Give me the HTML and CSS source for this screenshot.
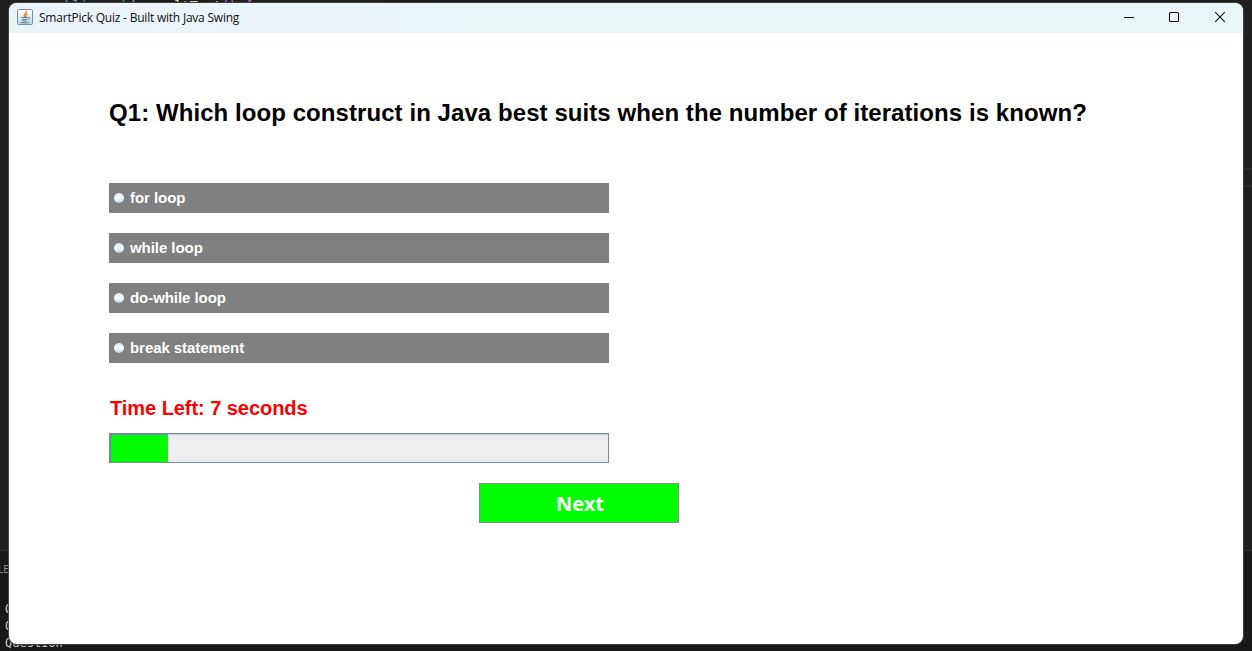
FILE: index.html
```html
<!DOCTYPE html>
<html lang="en">
<head>
<meta charset="utf-8">
<title>SmartPick Quiz</title>
<link rel="stylesheet" href="styles.css">
</head>
<body>
<div class="editor">
  <div class="code"><span class="kw">public</span> <span class="type">void</span> <span class="fn">resultText</span><span class="paren">()</span> <span class="brace">{</span></div>
  <div class="current-line"></div>
  <div class="terminal"></div>
  <div class="tab">LE</div>
  <pre class="output">Q
Q
Question</pre>
</div>
<main class="window">
  <header class="titlebar">
    <svg class="java" viewBox="0 0 16 16">
      <defs><linearGradient id="tile" x2="0" y2="1"><stop stop-color="#fff"/><stop offset="1" stop-color="#c3d3e2"/></linearGradient></defs>
      <rect x=".5" y=".5" width="15" height="15" rx="1" fill="url(#tile)" stroke="#7590a9"/>
      <path d="M9.2 1.8C10 4 5.8 4.7 7.6 8M10.6 4.3C7.9 5.6 9.7 6.3 8.7 8" fill="none" stroke="#ee8127" stroke-width="1.3"/>
      <path d="M4.5 8.5h6M5 10.3q2.5 1 5 0M5.6 11.8q2 .8 4 0M10.7 8.4c3-.5 1.8 2 .2 2.2M3.5 12.8c-2 1 7 1.8 9 .2" fill="none" stroke="#4f7da1"/>
    </svg>
    <span class="title">SmartPick Quiz - Built with Java Swing</span>
    <svg class="controls" viewBox="0 0 138 30" fill="none" stroke="#111" stroke-width="1.1">
      <path d="M19 14.5h10"/><rect x="64.5" y="9.5" width="9" height="9" rx="1"/><path d="M110.2 9.2l9.6 9.6m0-9.6l-9.6 9.6"/>
    </svg>
  </header>
  <section class="quiz">
    <h1 class="question">Q1: Which loop construct in Java best suits when the number of iterations is known?</h1>
    <div class="options">
      <label class="option"><i class="radio"></i><span class="answer">for loop</span></label>
      <label class="option"><i class="radio"></i><span class="answer">while loop</span></label>
      <label class="option"><i class="radio"></i><span class="answer">do-while loop</span></label>
      <label class="option"><i class="radio"></i><span class="answer">break statement</span></label>
    </div>
    <div class="timer">Time Left: 7 seconds</div>
    <div class="progress"><div class="fill"></div></div>
    <button class="next">Next</button>
  </section>
</main>
</body>
</html>
```
FILE: styles.css
```css
* { box-sizing: border-box; }
body { margin: 0; width: 1252px; height: 651px; overflow: hidden; background: #1f1f1f; font-family: "Liberation Sans", Arial, sans-serif; }
.editor { position: absolute; inset: 0; overflow: hidden; }
.code { position: absolute; left: 49px; top: -2px; font: 13px/16px "DejaVu Sans Mono", monospace; white-space: pre; color: #ccc; }
.kw { color: #569cd6; }
.type { color: #4ec9b0; }
.fn { color: #dcdcaa; }
.paren { color: #da70d6; }
.brace { color: #da70d6; }
.current-line { position: absolute; left: 1200px; right: 0; top: 168px; height: 19px; border: solid #2a2a2a; border-width: 2px 0; }
.terminal { position: absolute; left: 0; right: 0; top: 550px; bottom: 0; background: #181818; border-top: 1px solid #303030; }
.tab { position: absolute; left: -2px; top: 563px; font: 10px/13px "Open Sans", sans-serif; color: #999; }
.output { position: absolute; left: 5px; top: 601px; margin: 0; font: 12px/17px "DejaVu Sans Mono", monospace; color: #ccc; }
.window { position: absolute; left: 9px; top: 3px; width: 1234px; height: 641px; background: #fff; border-radius: 8px; overflow: hidden; box-shadow: 0 0 0 1px #424242; }
.titlebar { display: flex; align-items: center; height: 30px; padding-left: 8px; background: linear-gradient(90deg, #eaf3f9, #eaf5f8 40%); }
.java { width: 16px; height: 16px; margin-top: -2px; }
.title { margin-left: 6px; font: 12px/28px "Open Sans", sans-serif; letter-spacing: -.22px; color: #111; }
.controls { width: 138px; height: 30px; margin-left: auto; }
.quiz { display: flex; flex-direction: column; align-items: flex-start; padding: 60px 100px 0; }
.question { margin: 0; height: 40px; font-size: 24px; line-height: 40px; white-space: nowrap; color: #000; letter-spacing: .07px; }
.options { display: flex; flex-direction: column; gap: 20px; margin-top: 50px; }
.option { display: flex; align-items: center; width: 500px; height: 30px; padding-left: 5px; gap: 6px; background: #808080; color: #fff; font-size: 15px; font-weight: bold; letter-spacing: -.06px; }
.answer { padding-bottom: 2px; }
.radio { width: 10px; height: 10px; border-radius: 50%; background: linear-gradient(#d6e4f1, #fff 50%, #b8cfe5); }
.timer { margin: 30px 0 0 1px; height: 30px; font-size: 20px; font-weight: bold; line-height: 30px; letter-spacing: -.05px; color: #f00; white-space: nowrap; }
.progress { width: 500px; height: 30px; margin-top: 10px; border: 1px solid #7a8a99; background: #eee; box-shadow: inset 0 1px #b8cfe5; }
.fill { width: 58px; height: 28px; background: #0f0; border: solid #6382bf; border-width: 1px 0 0 1px; }
.next { width: 200px; height: 40px; margin: 20px 0 0 370px; padding: 2px 0 0 2px; border: 1px solid #7a8a99; background: #0f0; color: #fff; font: bold 20px/36px "Noto Sans", sans-serif; }
```
